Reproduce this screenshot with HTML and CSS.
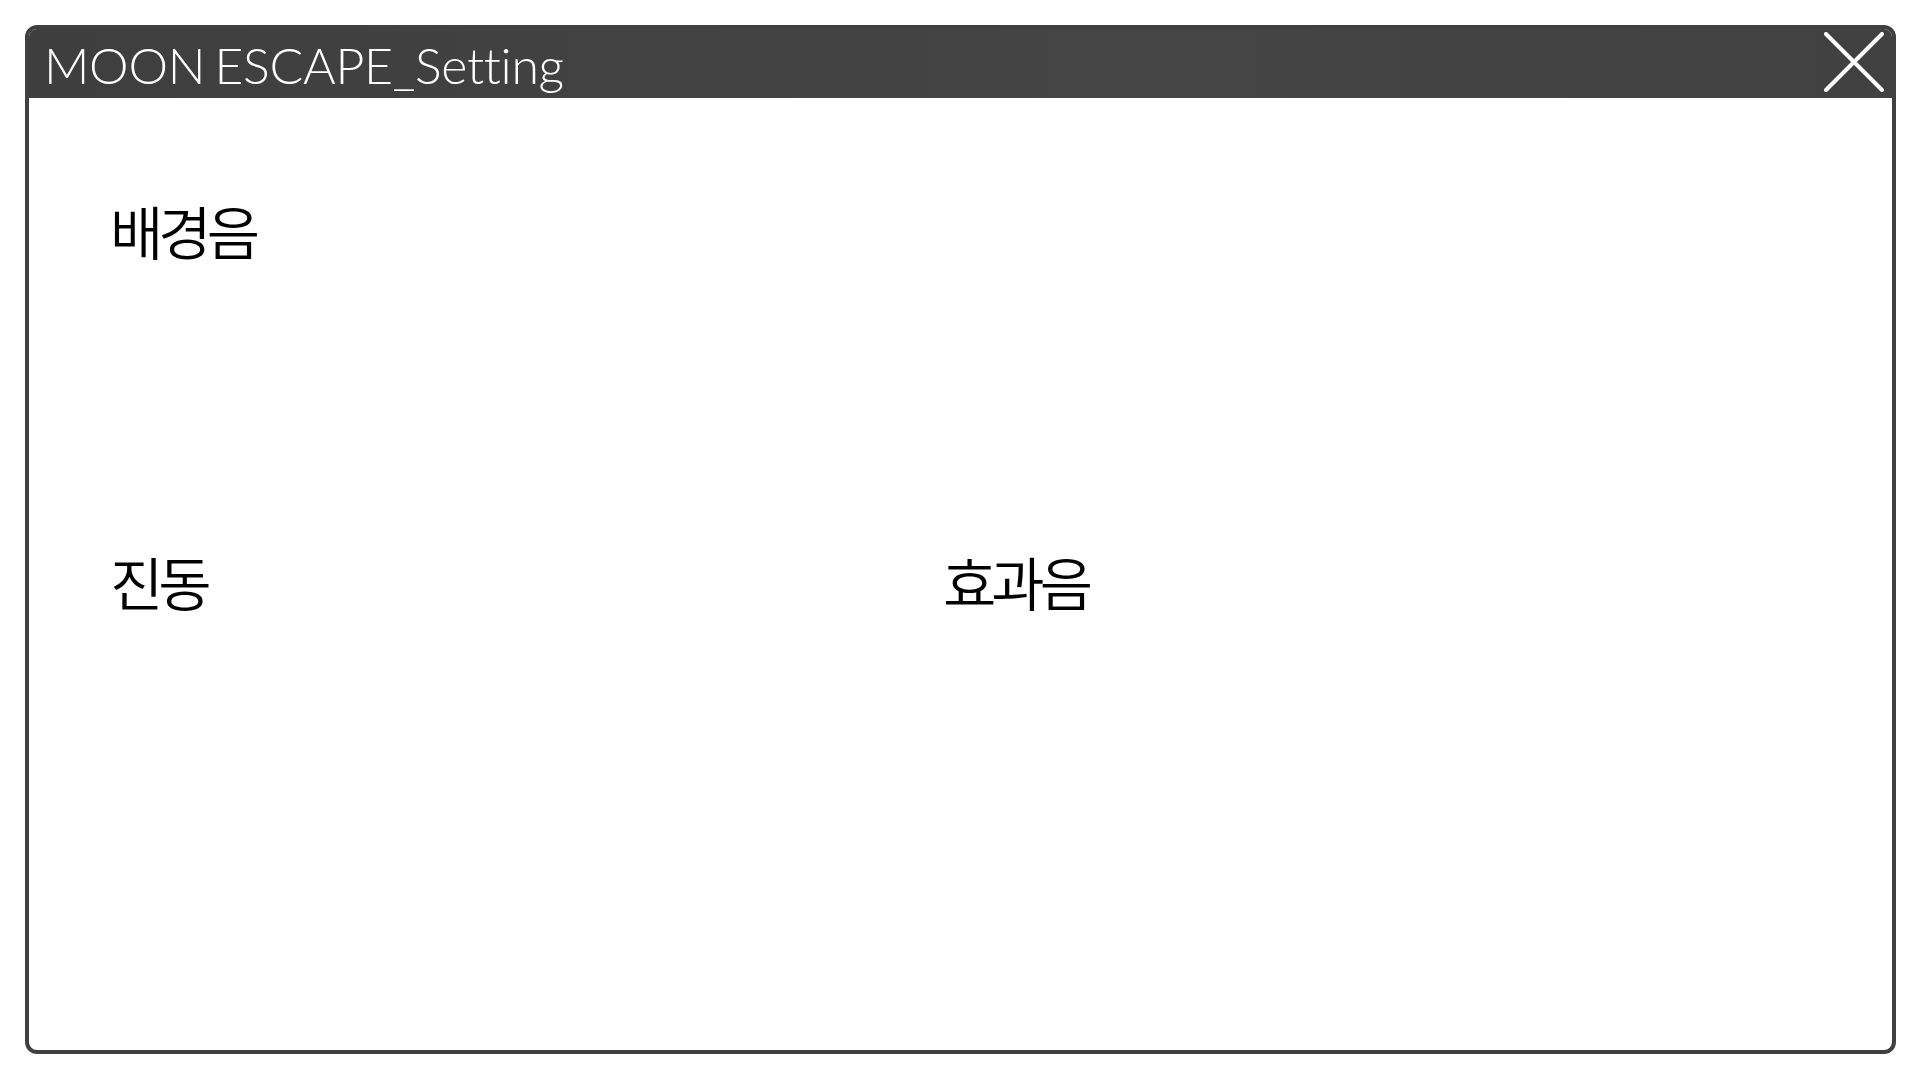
FILE: index.html
```html
<!DOCTYPE html>
<html lang="ko">
<head>
<meta charset="utf-8">
<title>MOON ESCAPE_Setting</title>
<link rel="stylesheet" href="styles.css">
</head>
<body>
<div class="window">
  <div class="titlebar">
    <span class="title">MOON ESCAPE_Setting</span>
    <button class="close" aria-label="닫기">
      <svg width="60" height="60" viewBox="0 0 60 60"><path d="M2 2 L58 58 M58 2 L2 58" stroke="#fff" stroke-width="4" stroke-linecap="round" fill="none"/></svg>
    </button>
  </div>
  <div class="content">
    <div class="cell"><span class="label">배경음</span></div>
    <div class="cell"></div>
    <div class="cell"><span class="label">진동</span></div>
    <div class="cell"><span class="label">효과음</span></div>
  </div>
</div>
</body>
</html>
```
FILE: styles.css
```css
html, body {
  margin: 0;
  padding: 0;
  background: #ffffff;
}
body {
  width: 1920px;
  height: 1080px;
  overflow: hidden;
}
.window {
  box-sizing: border-box;
  margin: 25px 0 0 25px;
  width: 1871px;
  height: 1029px;
  border: 4px solid #404040;
  border-radius: 12px;
  background: #ffffff;
  display: flex;
  flex-direction: column;
  overflow: hidden;
}
.titlebar {
  height: 69px;
  flex: none;
  background: linear-gradient(90deg, #3e3e3e 0%, #454545 60%, #414141 100%);
  display: flex;
  align-items: center;
  justify-content: space-between;
  padding: 0 8px 0 15px;
}
.title {
  font-family: "Lato", "Noto Sans", sans-serif;
  font-weight: 300;
  font-size: 50px;
  color: #ffffff;
  letter-spacing: -0.3px;
  word-spacing: -4px;
  line-height: 1;
  position: relative;
  top: 1px;
}
.close {
  border: 0;
  background: transparent;
  padding: 0;
  width: 60px;
  height: 60px;
  display: flex;
  align-items: center;
  justify-content: center;
  cursor: pointer;
  margin-top: -3px;
}
.content {
  flex: 1;
  display: grid;
  grid-template-columns: 833px 1fr;
  grid-template-rows: 351px 1fr;
  padding: 0 0 0 81px;
}
.cell {
  padding-top: 103px;
}
.label {
  font-family: "Noto Sans CJK KR", "Noto Sans", sans-serif;
  font-weight: 350;
  font-size: 58px;
  letter-spacing: -5px;
  color: #000000;
  line-height: 1;
  display: inline-block;
}
```
